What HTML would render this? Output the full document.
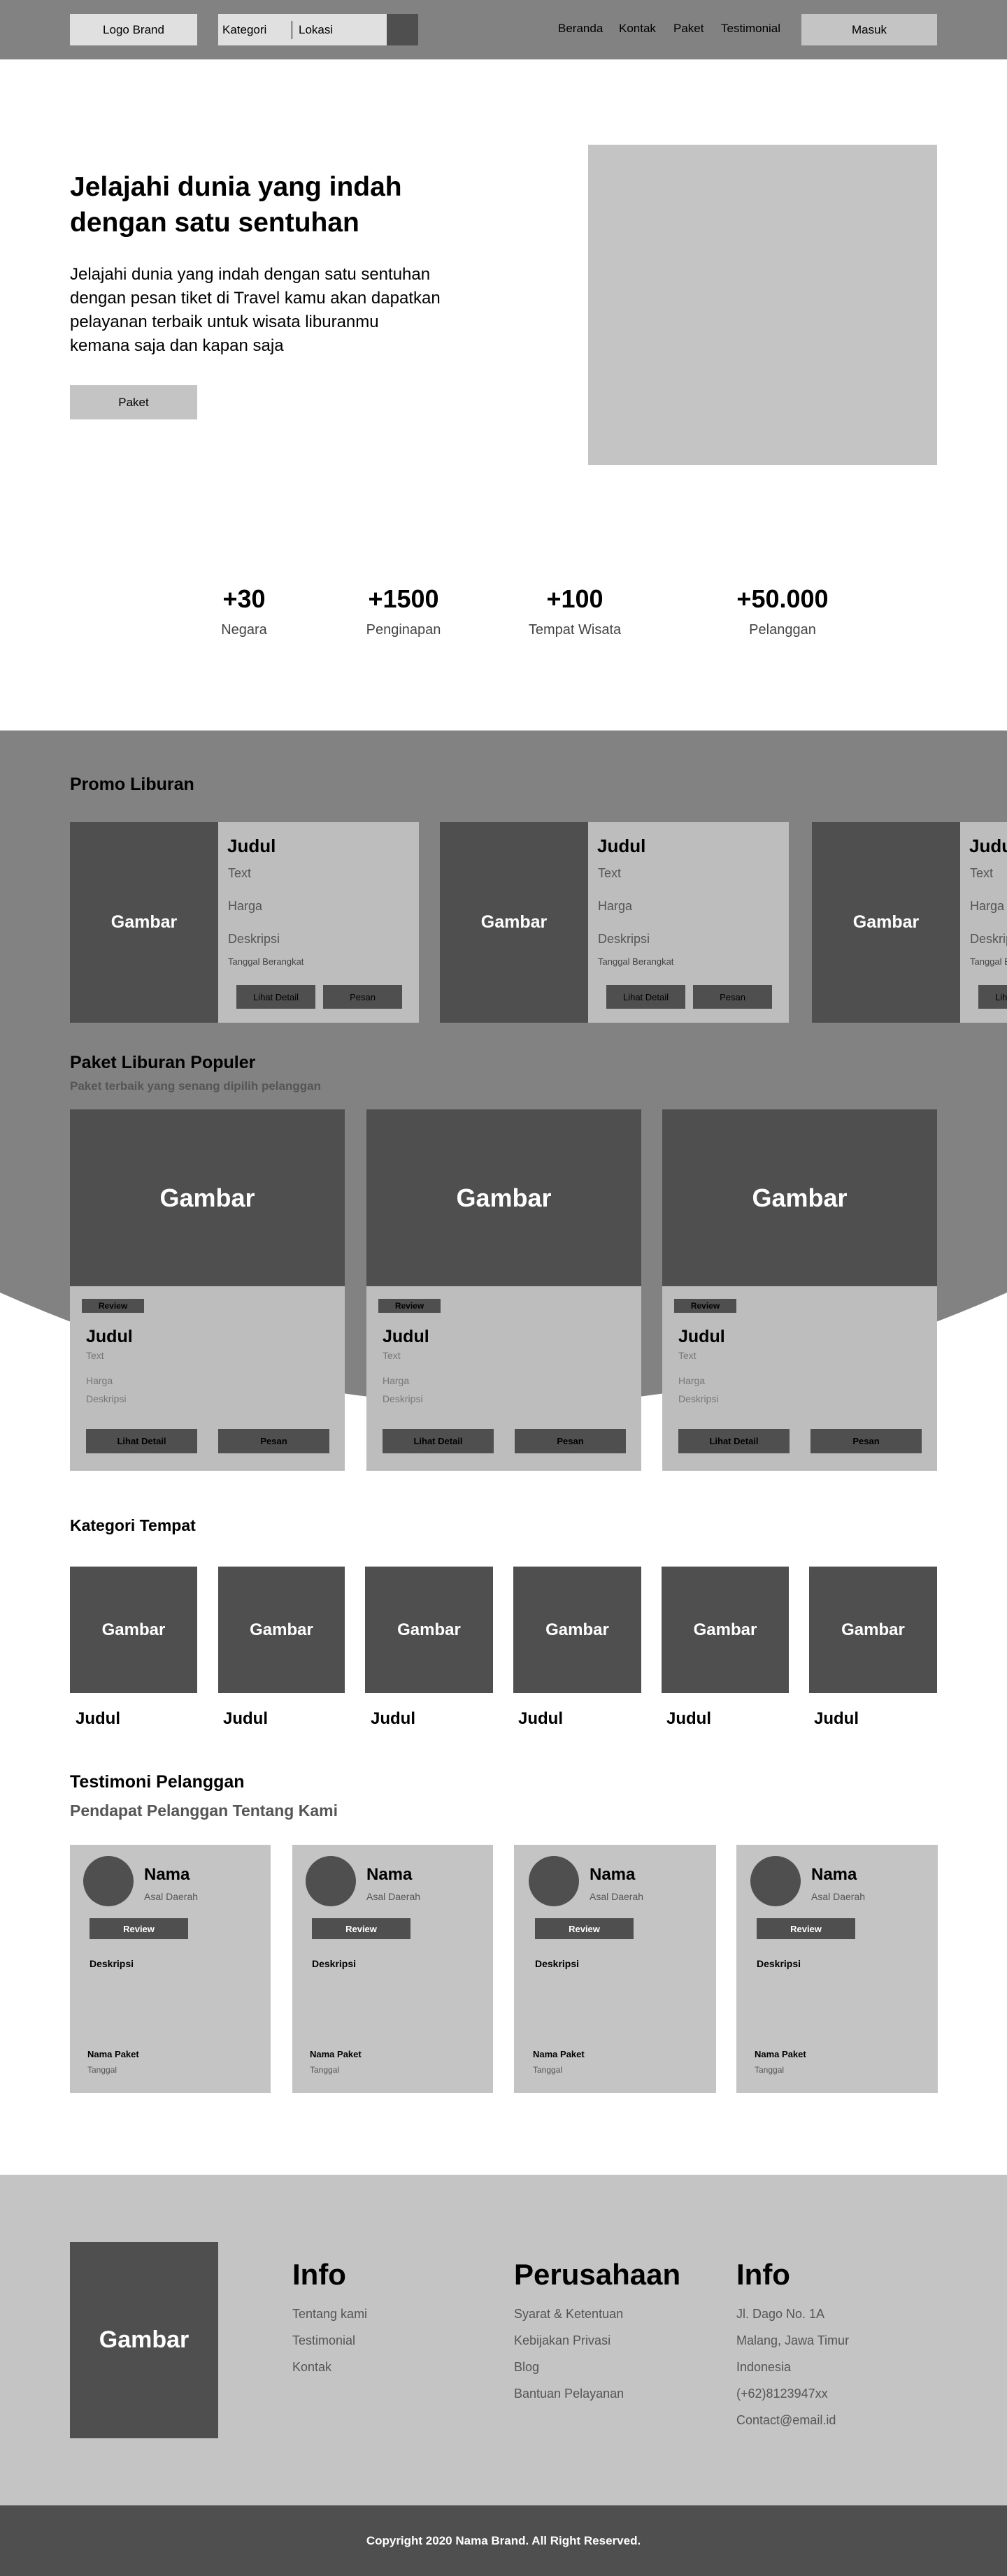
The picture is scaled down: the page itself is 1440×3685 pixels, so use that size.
<!DOCTYPE html>
<html><head><meta charset="utf-8"><style>
*{margin:0;padding:0;box-sizing:border-box}
body{width:1440px;height:3685px;position:relative;font-family:"Liberation Sans",sans-serif;background:#fff;overflow:hidden}
.a{position:absolute}
.c{display:flex;align-items:center;justify-content:center}
.dk{background:#4f4f4f}
.g{color:#fff;font-weight:bold}
.btn{position:absolute;background:#4f4f4f;color:#000;font-size:13px;font-weight:bold;display:flex;align-items:center;justify-content:center}
.t{position:absolute;white-space:nowrap}
</style></head><body>
<!-- header -->
<div class="a" style="left:0;top:0;width:1440px;height:85px;background:#828282"></div>
<div class="a c" style="left:100px;top:20px;width:182px;height:45px;background:#e0e0e0;font-size:17px">Logo Brand</div>
<div class="a" style="left:312px;top:20px;width:241px;height:45px;background:#e0e0e0"></div>
<div class="a dk" style="left:553px;top:20px;width:45px;height:45px"></div>
<div class="t" style="left:318px;top:33px;font-size:17px">Kategori</div>
<div class="a" style="left:417px;top:30px;width:1px;height:26px;background:#000"></div>
<div class="t" style="left:427px;top:33px;font-size:17px">Lokasi</div>
<div class="t" style="left:798px;top:31px;font-size:17px">Beranda</div>
<div class="t" style="left:885px;top:31px;font-size:17px">Kontak</div>
<div class="t" style="left:963px;top:31px;font-size:17px">Paket</div>
<div class="t" style="left:1031px;top:31px;font-size:17px">Testimonial</div>
<div class="a c" style="left:1146px;top:20px;width:194px;height:45px;background:#c4c4c4;font-size:17px">Masuk</div>
<!-- hero -->
<div class="t" style="left:100px;top:242px;font-size:39px;font-weight:bold;line-height:51px">Jelajahi dunia yang indah<br>dengan satu sentuhan</div>
<div class="t" style="left:100px;top:376px;font-size:24px;line-height:34px">Jelajahi dunia yang indah dengan satu sentuhan<br>dengan pesan tiket di Travel kamu akan dapatkan<br>pelayanan terbaik untuk wisata liburanmu<br>kemana saja dan kapan saja</div>
<div class="a c" style="left:100px;top:551px;width:182px;height:49px;background:#c4c4c4;font-size:17px">Paket</div>
<div class="a" style="left:841px;top:207px;width:499px;height:458px;background:#c4c4c4"></div>
<!-- stats -->
<div class="t" style="left:249px;width:200px;text-align:center;top:836px;font-size:36px;font-weight:bold">+30</div>
<div class="t" style="left:477px;width:200px;text-align:center;top:836px;font-size:36px;font-weight:bold">+1500</div>
<div class="t" style="left:722px;width:200px;text-align:center;top:836px;font-size:36px;font-weight:bold">+100</div>
<div class="t" style="left:1019px;width:200px;text-align:center;top:836px;font-size:36px;font-weight:bold">+50.000</div>
<div class="t" style="left:249px;width:200px;text-align:center;top:890px;font-size:20px;color:#444">Negara</div>
<div class="t" style="left:477px;width:200px;text-align:center;top:890px;font-size:20px;color:#444">Penginapan</div>
<div class="t" style="left:722px;width:200px;text-align:center;top:890px;font-size:20px;color:#444">Tempat Wisata</div>
<div class="t" style="left:1019px;width:200px;text-align:center;top:890px;font-size:20px;color:#444">Pelanggan</div>
<!-- gray bg -->
<svg class="a" style="left:0;top:0" width="1440" height="2200"><path d="M0 1045H1440V1849Q720 2170 0 1849Z" fill="#828282"/></svg>
<div class="t" style="left:100px;top:1108px;font-size:25px;font-weight:bold">Promo Liburan</div>
<!-- promo cards -->
<div class="a" style="left:100px;top:1176px;width:499px;height:287px;background:#bdbdbd"></div>
<div class="a c dk g" style="left:100px;top:1176px;width:212px;height:287px;font-size:25px">Gambar</div>
<div class="a" style="left:629px;top:1176px;width:499px;height:287px;background:#bdbdbd"></div>
<div class="a c dk g" style="left:629px;top:1176px;width:212px;height:287px;font-size:25px">Gambar</div>
<div class="a" style="left:1161px;top:1176px;width:300px;height:287px;background:#bdbdbd"></div>
<div class="a c dk g" style="left:1161px;top:1176px;width:212px;height:287px;font-size:25px">Gambar</div>
<div class="t" style="left:325px;top:1195px;font-size:26px;font-weight:bold">Judul</div>
<div class="t" style="left:326px;top:1239px;font-size:18px;color:#555">Text</div>
<div class="t" style="left:326px;top:1286px;font-size:18px;color:#555">Harga</div>
<div class="t" style="left:326px;top:1333px;font-size:18px;color:#555">Deskripsi</div>
<div class="t" style="left:326px;top:1368px;font-size:13px;color:#444">Tanggal Berangkat</div>
<div class="btn" style="left:338px;top:1409px;width:113px;height:34px;font-weight:normal;font-size:13px">Lihat Detail</div>
<div class="btn" style="left:462px;top:1409px;width:113px;height:34px;font-weight:normal;font-size:13px">Pesan</div>
<div class="t" style="left:854px;top:1195px;font-size:26px;font-weight:bold">Judul</div>
<div class="t" style="left:855px;top:1239px;font-size:18px;color:#555">Text</div>
<div class="t" style="left:855px;top:1286px;font-size:18px;color:#555">Harga</div>
<div class="t" style="left:855px;top:1333px;font-size:18px;color:#555">Deskripsi</div>
<div class="t" style="left:855px;top:1368px;font-size:13px;color:#444">Tanggal Berangkat</div>
<div class="btn" style="left:867px;top:1409px;width:113px;height:34px;font-weight:normal">Lihat Detail</div>
<div class="btn" style="left:991px;top:1409px;width:113px;height:34px;font-weight:normal">Pesan</div>
<div class="t" style="left:1386px;top:1195px;font-size:26px;font-weight:bold">Judul</div>
<div class="t" style="left:1387px;top:1239px;font-size:18px;color:#555">Text</div>
<div class="t" style="left:1387px;top:1286px;font-size:18px;color:#555">Harga</div>
<div class="t" style="left:1387px;top:1333px;font-size:18px;color:#555">Deskripsi</div>
<div class="t" style="left:1387px;top:1368px;font-size:13px;color:#444">Tanggal Berangkat</div>
<div class="btn" style="left:1399px;top:1409px;width:113px;height:34px;font-weight:normal">Lihat Detail</div>
<div class="t" style="left:100px;top:1506px;font-size:25px;font-weight:bold">Paket Liburan Populer</div>
<div class="t" style="left:100px;top:1544px;font-size:17px;font-weight:bold;color:#555">Paket terbaik yang senang dipilih pelanggan</div>
<!-- popular cards -->
<div class="a" style="left:100px;top:1587px;width:393px;height:517px;background:#bdbdbd"></div>
<div class="a c dk g" style="left:100px;top:1587px;width:393px;height:253px;font-size:36px">Gambar</div>
<div class="btn" style="left:117px;top:1858px;width:89px;height:20px;font-size:12px">Review</div>
<div class="t" style="left:123px;top:1898px;font-size:25px;font-weight:bold">Judul</div>
<div class="t" style="left:123px;top:1931px;font-size:14px;color:#777">Text</div>
<div class="t" style="left:123px;top:1967px;font-size:14px;color:#777">Harga</div>
<div class="t" style="left:123px;top:1993px;font-size:14px;color:#777">Deskripsi</div>
<div class="btn" style="left:123px;top:2044px;width:159px;height:35px">Lihat Detail</div>
<div class="btn" style="left:312px;top:2044px;width:159px;height:35px">Pesan</div>
<div class="a" style="left:524px;top:1587px;width:393px;height:517px;background:#bdbdbd"></div>
<div class="a c dk g" style="left:524px;top:1587px;width:393px;height:253px;font-size:36px">Gambar</div>
<div class="btn" style="left:541px;top:1858px;width:89px;height:20px;font-size:12px">Review</div>
<div class="t" style="left:547px;top:1898px;font-size:25px;font-weight:bold">Judul</div>
<div class="t" style="left:547px;top:1931px;font-size:14px;color:#777">Text</div>
<div class="t" style="left:547px;top:1967px;font-size:14px;color:#777">Harga</div>
<div class="t" style="left:547px;top:1993px;font-size:14px;color:#777">Deskripsi</div>
<div class="btn" style="left:547px;top:2044px;width:159px;height:35px">Lihat Detail</div>
<div class="btn" style="left:736px;top:2044px;width:159px;height:35px">Pesan</div>
<div class="a" style="left:947px;top:1587px;width:393px;height:517px;background:#bdbdbd"></div>
<div class="a c dk g" style="left:947px;top:1587px;width:393px;height:253px;font-size:36px">Gambar</div>
<div class="btn" style="left:964px;top:1858px;width:89px;height:20px;font-size:12px">Review</div>
<div class="t" style="left:970px;top:1898px;font-size:25px;font-weight:bold">Judul</div>
<div class="t" style="left:970px;top:1931px;font-size:14px;color:#777">Text</div>
<div class="t" style="left:970px;top:1967px;font-size:14px;color:#777">Harga</div>
<div class="t" style="left:970px;top:1993px;font-size:14px;color:#777">Deskripsi</div>
<div class="btn" style="left:970px;top:2044px;width:159px;height:35px">Lihat Detail</div>
<div class="btn" style="left:1159px;top:2044px;width:159px;height:35px">Pesan</div>
<!-- kategori -->
<div class="t" style="left:100px;top:2169px;font-size:23px;font-weight:bold">Kategori Tempat</div>
<div class="a c dk g" style="left:100px;top:2241px;width:182px;height:181px;font-size:24px">Gambar</div>
<div class="a c dk g" style="left:312px;top:2241px;width:181px;height:181px;font-size:24px">Gambar</div>
<div class="a c dk g" style="left:522px;top:2241px;width:183px;height:181px;font-size:24px">Gambar</div>
<div class="a c dk g" style="left:734px;top:2241px;width:183px;height:181px;font-size:24px">Gambar</div>
<div class="a c dk g" style="left:946px;top:2241px;width:182px;height:181px;font-size:24px">Gambar</div>
<div class="a c dk g" style="left:1157px;top:2241px;width:183px;height:181px;font-size:24px">Gambar</div>
<div class="t" style="left:108px;top:2445px;font-size:24px;font-weight:bold">Judul</div>
<div class="t" style="left:319px;top:2445px;font-size:24px;font-weight:bold">Judul</div>
<div class="t" style="left:530px;top:2445px;font-size:24px;font-weight:bold">Judul</div>
<div class="t" style="left:741px;top:2445px;font-size:24px;font-weight:bold">Judul</div>
<div class="t" style="left:953px;top:2445px;font-size:24px;font-weight:bold">Judul</div>
<div class="t" style="left:1164px;top:2445px;font-size:24px;font-weight:bold">Judul</div>
<!-- testimoni -->
<div class="t" style="left:100px;top:2535px;font-size:25px;font-weight:bold">Testimoni Pelanggan</div>
<div class="t" style="left:100px;top:2577px;font-size:23px;font-weight:bold;color:#555">Pendapat Pelanggan Tentang Kami</div>
<div class="a" style="left:100px;top:2639px;width:287px;height:355px;background:#c4c4c4"></div>
<div class="a" style="left:418px;top:2639px;width:287px;height:355px;background:#c4c4c4"></div>
<div class="a" style="left:735px;top:2639px;width:289px;height:355px;background:#c4c4c4"></div>
<div class="a" style="left:1053px;top:2639px;width:288px;height:355px;background:#c4c4c4"></div>
<div class="a dk" style="left:119px;top:2655px;width:72px;height:72px;border-radius:50%"></div>
<div class="a dk" style="left:437px;top:2655px;width:72px;height:72px;border-radius:50%"></div>
<div class="a dk" style="left:756px;top:2655px;width:72px;height:72px;border-radius:50%"></div>
<div class="a dk" style="left:1073px;top:2655px;width:72px;height:72px;border-radius:50%"></div>
<div class="t" style="left:206px;top:2668px;font-size:24px;font-weight:bold">Nama</div>
<div class="t" style="left:524px;top:2668px;font-size:24px;font-weight:bold">Nama</div>
<div class="t" style="left:843px;top:2668px;font-size:24px;font-weight:bold">Nama</div>
<div class="t" style="left:1160px;top:2668px;font-size:24px;font-weight:bold">Nama</div>
<div class="t" style="left:206px;top:2705px;font-size:14px;color:#555">Asal Daerah</div>
<div class="t" style="left:524px;top:2705px;font-size:14px;color:#555">Asal Daerah</div>
<div class="t" style="left:843px;top:2705px;font-size:14px;color:#555">Asal Daerah</div>
<div class="t" style="left:1160px;top:2705px;font-size:14px;color:#555">Asal Daerah</div>
<div class="btn" style="left:128px;top:2744px;width:141px;height:30px;color:#fff">Review</div>
<div class="btn" style="left:446px;top:2744px;width:141px;height:30px;color:#fff">Review</div>
<div class="btn" style="left:765px;top:2744px;width:141px;height:30px;color:#fff">Review</div>
<div class="btn" style="left:1082px;top:2744px;width:141px;height:30px;color:#fff">Review</div>
<div class="t" style="left:128px;top:2801px;font-size:14px;font-weight:bold">Deskripsi</div>
<div class="t" style="left:446px;top:2801px;font-size:14px;font-weight:bold">Deskripsi</div>
<div class="t" style="left:765px;top:2801px;font-size:14px;font-weight:bold">Deskripsi</div>
<div class="t" style="left:1082px;top:2801px;font-size:14px;font-weight:bold">Deskripsi</div>
<div class="t" style="left:125px;top:2931px;font-size:13px;font-weight:bold">Nama Paket</div>
<div class="t" style="left:443px;top:2931px;font-size:13px;font-weight:bold">Nama Paket</div>
<div class="t" style="left:762px;top:2931px;font-size:13px;font-weight:bold">Nama Paket</div>
<div class="t" style="left:1079px;top:2931px;font-size:13px;font-weight:bold">Nama Paket</div>
<div class="t" style="left:125px;top:2954px;font-size:12px;color:#555">Tanggal</div>
<div class="t" style="left:443px;top:2954px;font-size:12px;color:#555">Tanggal</div>
<div class="t" style="left:762px;top:2954px;font-size:12px;color:#555">Tanggal</div>
<div class="t" style="left:1079px;top:2954px;font-size:12px;color:#555">Tanggal</div>
<!-- footer -->
<div class="a" style="left:0;top:3111px;width:1440px;height:473px;background:#c4c4c4"></div>
<div class="a c dk g" style="left:100px;top:3207px;width:212px;height:281px;font-size:34px">Gambar</div>
<div class="t" style="left:418px;top:3230px;font-size:42px;font-weight:bold">Info</div>
<div class="t" style="left:735px;top:3230px;font-size:42px;font-weight:bold">Perusahaan</div>
<div class="t" style="left:1053px;top:3230px;font-size:42px;font-weight:bold">Info</div>
<div class="t" style="left:418px;top:3291px;font-size:18px;color:#555;line-height:38px">Tentang kami<br>Testimonial<br>Kontak</div>
<div class="t" style="left:735px;top:3291px;font-size:18px;color:#555;line-height:38px">Syarat &amp; Ketentuan<br>Kebijakan Privasi<br>Blog<br>Bantuan Pelayanan</div>
<div class="t" style="left:1053px;top:3291px;font-size:18px;color:#555;line-height:38px">Jl. Dago No. 1A<br>Malang, Jawa Timur<br>Indonesia<br>(+62)8123947xx<br>Contact@email.id</div>
<div class="a c dk" style="left:0;top:3584px;width:1440px;height:101px;color:#fff;font-weight:bold;font-size:17px">Copyright 2020 Nama Brand. All Right Reserved.</div>
</body></html>
